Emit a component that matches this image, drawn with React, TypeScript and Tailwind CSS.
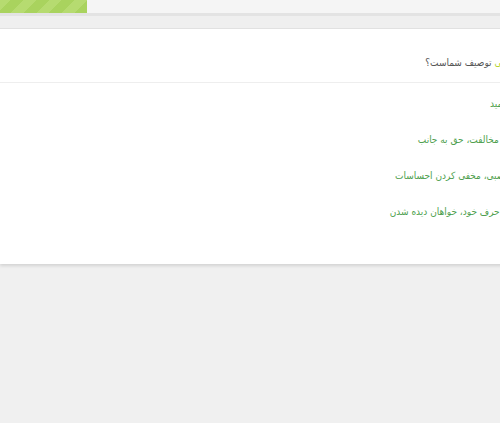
import React from 'react';

const options = [
  'ناامید',
  'در مخالفت، حق به جانب',
  'عصبی، مخفی کردن احساسات',
  'بر حرف خود، خواهان دیده شدن',
];

export default function App() {
  return (
    <div className="min-h-screen w-[500px] overflow-hidden bg-[#f0f0f0] font-['DejaVu_Sans_Condensed','DejaVu_Sans',sans-serif]">
      {/* progress */}
      <div className="h-[13px] bg-[#f5f5f5]">
        <div className="h-full w-[87px] bg-[repeating-linear-gradient(-45deg,#a9d35e_0px,#a9d35e_9px,#b6db70_9px,#b6db70_18px)]" />
      </div>
      <div className="h-[3px] bg-[#e3e3e3]" />
      <div className="h-[13px] border-b border-[#e2e2e2] bg-[#efefef]" />

      {/* question card */}
      <div dir="rtl" className="w-[560px] bg-white shadow-[0_2px_3px_rgba(0,0,0,0.12)]">
        <div className="flex h-[54px] items-center border-b border-[#eeeeee] pr-[22px] pt-[14px] text-[10px] text-[#555555]">
          <span>
            کدام <span className="text-[#b5d435]">ویژگی</span> توصیف شماست؟
          </span>
        </div>
        <div className="pb-[35px] pt-[2px] pr-[50px]">
          {options.map((o) => (
            <label key={o} className="flex h-9 cursor-pointer items-center gap-2 text-[10px] text-[#4f9f4f]">
              <input type="radio" name="q" className="hidden" />
              <span>{o}</span>
            </label>
          ))}
        </div>
      </div>
    </div>
  );
}
